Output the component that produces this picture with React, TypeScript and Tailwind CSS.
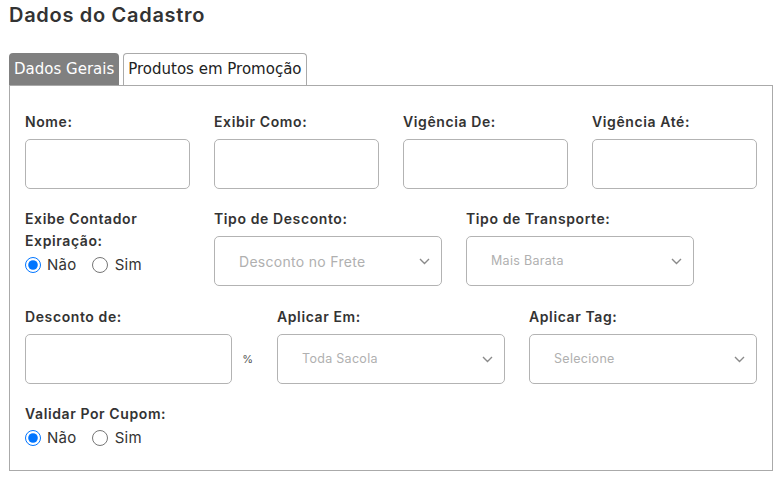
import React from "react";

const F = { fontFamily: "Inter, 'Open Sans', sans-serif" };

function Label({ children }: { children: React.ReactNode }) {
  return (
    <div className="text-[14px] leading-[22px] font-semibold text-[#333] tracking-[0.6px]" style={F}>
      {children}
    </div>
  );
}

function TextBox({ className = "" }: { className?: string }) {
  return <div className={`h-[50px] border border-[#b3b3b3] rounded-[5px] bg-white ${className}`} />;
}

function Chevron() {
  return (
    <svg width="11" height="7" viewBox="0 0 11 7" className="shrink-0">
      <path d="M1 1l4.5 4.5L10 1" fill="none" stroke="#8a8a8a" strokeWidth="1.4" />
    </svg>
  );
}

function Select({ text, small }: { text: string; small?: boolean }) {
  return (
    <div className="h-[50px] border border-[#b3b3b3] rounded-[5px] bg-white flex items-center justify-between pl-[24px] pr-[11px]">
      <span className={`${small ? "text-[12.5px]" : "text-[14px]"} text-[#b0b0b0] tracking-[0.3px]`} style={F}>
        {text}
      </span>
      <Chevron />
    </div>
  );
}

function Radios({ name }: { name: string }) {
  return (
    <div className="flex items-center h-[22px] text-[15px] text-[#333] tracking-[0.3px]" style={F}>
      <input type="radio" defaultChecked name={name} className="w-4 h-4 m-0 accent-[#0075ff]" />
      <span className="ml-[6px]">Não</span>
      <input type="radio" name={name} className="w-4 h-4 m-0 ml-[15px]" />
      <span className="ml-[7px]">Sim</span>
    </div>
  );
}

export default function App() {
  return (
    <div className="w-[783px] h-[481px] bg-white pl-[9px] pr-[10px] pt-[2px]">
      <h1 className="text-[20px] leading-[26px] font-semibold text-[#333] tracking-[0.7px]" style={F}>
        Dados do Cadastro
      </h1>
      <div className="flex items-end mt-[25px] gap-[4px] whitespace-nowrap" style={{ fontFamily: "'DejaVu Sans', Verdana, sans-serif" }}>
        <div className="h-[32px] px-[5px] flex items-center bg-[#808080] text-white text-[15px] rounded-t-[4px]">
          Dados Gerais
        </div>
        <div className="h-[32px] px-[4px] flex items-center bg-white text-[#222] text-[15px] rounded-t-[4px] border border-b-0 border-[#aaa]">
          Produtos em Promoção
        </div>
      </div>
      <div className="border border-[#aaa] h-[386px] px-[15px] pt-[25px]">
        <div className="grid grid-cols-4 gap-x-[24px]">
          {["Nome:", "Exibir Como:", "Vigência De:", "Vigência Até:"].map((l) => (
            <div key={l} className="flex flex-col gap-[6px]">
              <Label>{l}</Label>
              <TextBox />
            </div>
          ))}
        </div>
        <div className="grid grid-cols-12 gap-x-[24px] mt-[19px]">
          <div className="col-span-3 flex flex-col">
            <Label>
              Exibe Contador
              <br />
              Expiração:
            </Label>
            <div className="mt-[2px]">
              <Radios name="contador" />
            </div>
          </div>
          <div className="col-span-4 flex flex-col gap-[6px]">
            <Label>Tipo de Desconto:</Label>
            <Select text="Desconto no Frete" />
          </div>
          <div className="col-span-4 flex flex-col gap-[6px]">
            <Label>Tipo de Transporte:</Label>
            <Select text="Mais Barata" small />
          </div>
        </div>
        <div className="grid grid-cols-3 gap-x-[24px] mt-[20px]">
          <div className="flex flex-col gap-[6px]">
            <Label>Desconto de:</Label>
            <div className="flex items-center">
              <TextBox className="w-[209px]" />
              <span className="ml-[10px] text-[11px] text-[#555]" style={F}>%</span>
            </div>
          </div>
          <div className="flex flex-col gap-[6px]">
            <Label>Aplicar Em:</Label>
            <Select text="Toda Sacola" small />
          </div>
          <div className="flex flex-col gap-[6px]">
            <Label>Aplicar Tag:</Label>
            <Select text="Selecione" small />
          </div>
        </div>
        <div className="mt-[19px]">
          <Label>Validar Por Cupom:</Label>
          <div className="mt-[2px]">
            <Radios name="cupom" />
          </div>
        </div>
      </div>
    </div>
  );
}
